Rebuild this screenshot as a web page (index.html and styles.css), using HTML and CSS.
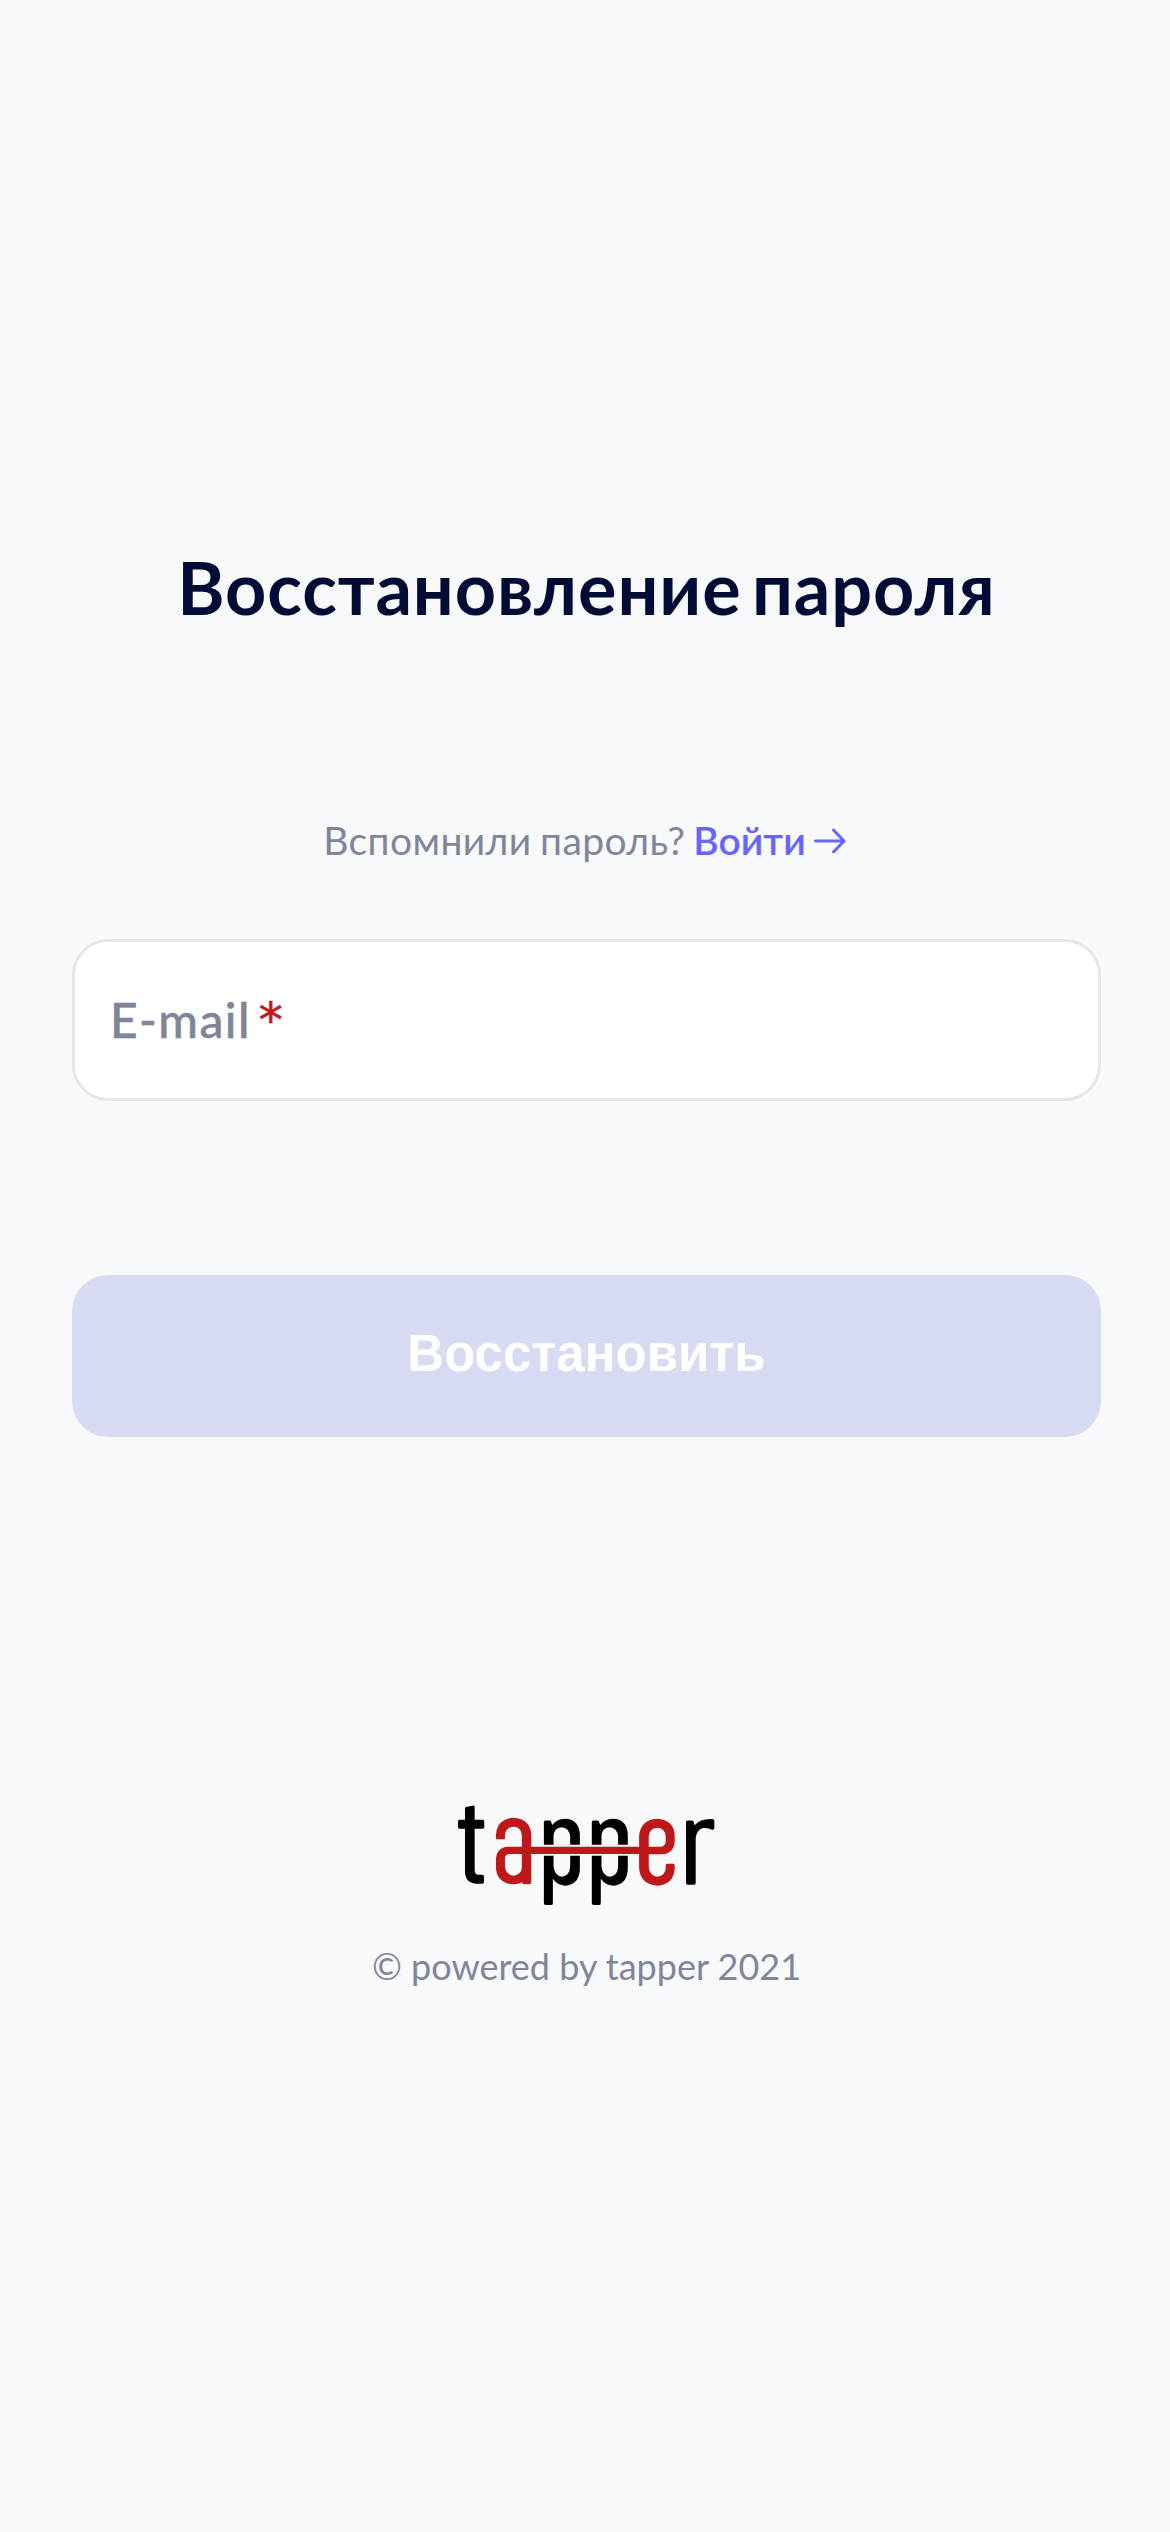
FILE: index.html
```html
<!DOCTYPE html>
<html lang="ru">
<head>
<meta charset="utf-8">
<title>Восстановление пароля</title>
<link rel="stylesheet" href="styles.css">
</head>
<body>
<main class="page">
  <h1 class="title">Восстановление пароля</h1>
  <p class="hint"><span class="question">Вспомнили пароль?</span><a class="login" href="#"><span>Войти</span><svg class="arrow" viewBox="0 0 32 26" fill="none" stroke="currentColor" stroke-width="3" stroke-linecap="round" stroke-linejoin="round"><path d="M1.500 14H30M19.500 3L30 14L19.500 25"/></svg></a></p>
  <label class="field"><span class="label">E-mail</span><span class="required">*</span></label>
  <button class="submit" disabled>Восстановить</button>
  <footer class="footer">
    <svg class="logo" viewBox="54 46 772 300" fill="none" role="img" aria-label="tapper">
      <g fill="#000">
        <path d="M75 56Q75 53 78 52L97 48Q104 46 104 52V90H128Q133 90 133 95V112Q133 117 128 117H104V239Q104 255 114 255H127Q132 255 132 260V277Q132 282 127 282H108Q75 280 75 245V117H59Q54 117 54 112V95Q54 90 59 90H75Z"/>
        <path d="M312 165V97Q312 92 317 92H329Q333 92 334 97L337 106Q350 88 375 87Q418 88 420 135V165H391V140Q388 115 365 113Q342 115 341 140V165ZM312 198H341V230Q343 258 366 261Q390 259 391 230V198H420V240Q417 285 376 288Q352 286 339 267V340Q339 346 334 346H317Q312 346 312 340Z"/>
        <path d="M456 165V97Q456 92 461 92H473Q477 92 478 97L481 106Q494 88 519 87Q562 88 564 135V165H535V140Q532 115 509 113Q486 115 485 140V165ZM456 198H485V230Q487 258 510 261Q534 259 535 230V198H564V240Q561 285 520 288Q496 286 483 267V340Q483 346 478 346H461Q456 346 456 340Z"/>
        <path d="M739 97Q739 92 744 92H757Q761 92 762 97L765 107Q782 86 819 88Q824 89 824 94V116Q823 122 817 120Q804 113 790 115Q770 121 768 145V280Q768 285 763 285H744Q739 285 739 280Z"/>
      </g>
      <g fill="#c01818">
        <path fill-rule="evenodd" d="M168 149V135Q171 87 221 84Q272 88 274 135V171H598V140Q601 91 652 87Q703 91 705 137V155Q703 192 667 194H627V230Q629 259 653 261Q677 258 678 235V227Q678 222 683 222H700Q705 222 705 227V237Q701 285 653 288Q601 284 598 235V193H274V277Q274 284 268 284H252Q246 282 246 278Q237 284 219 284Q171 280 168 235V210Q169 173 205 171H246V135Q243 112 221 111Q196 113 195 138V149ZM627 171H660Q676 171 678 156V140Q676 116 653 114Q629 116 627 140ZM246 193H209Q195 193 195 207V230Q198 256 221 258Q244 256 246 233Z"/>
      </g>
    </svg>
    <p class="copyright">© powered by tapper 2021</p>
  </footer>
</main>
</body>
</html>
```
FILE: styles.css
```css
* { box-sizing: border-box; }
body {
  margin: 0;
  background: #f7f9fb;
  font-family: Lato, "Noto Sans", sans-serif;
  color: #7f869a;
}
.page {
  display: flex;
  flex-direction: column;
  min-height: 2532px;
  padding: 544px 69px 0 72px;
}
.title {
  margin: 0 0 186px;
  font-size: 72px;
  line-height: 86px;
  font-weight: 700;
  letter-spacing: 0.9px;
  word-spacing: -8px;
  color: #000c35;
  text-align: center;
  white-space: nowrap;
}
.hint {
  display: flex;
  justify-content: center;
  gap: 8px;
  margin: 0 0 75px;
  padding-right: 4px;
  font-size: 39px;
  line-height: 48px;
}
.question { letter-spacing: 0.4px; word-spacing: -2px; }
.login {
  display: flex;
  align-items: center;
  gap: 8px;
  color: #6864ff;
  font-weight: 600;
  text-decoration: none;
}
.arrow { width: 32px; height: 26px; }
.field {
  display: flex;
  align-items: center;
  gap: 8px;
  height: 162px;
  padding: 0 35px;
  border: 3px solid #e5e7eb;
  border-radius: 36px;
  background: #fff;
  font-size: 48px;
  line-height: 58px;
  font-weight: 500;
}
.label { letter-spacing: 1.4px; -webkit-text-stroke: 0.5px; }
.required {
  color: #c01818;
  font-family: "DejaVu Sans", sans-serif;
  font-weight: 400;
  -webkit-text-stroke: 0.6px;
}
.submit {
  height: 162px;
  margin-top: 174px;
  padding: 0 0 5px;
  border: 0;
  border-radius: 36px;
  background: #d6dbf1;
  color: #fff;
  font: 700 51px "Liberation Sans", sans-serif;
}
.footer {
  display: flex;
  flex-direction: column;
  align-items: center;
  gap: 39px;
  margin-top: 368px;
}
.logo { width: 257px; height: 100px; }
.copyright { margin: 0; font-size: 36px; line-height: 44px; }
```
